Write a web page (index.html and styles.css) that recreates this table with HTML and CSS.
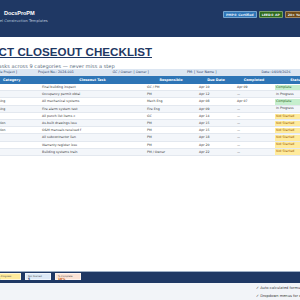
FILE: index.html
```html
<!DOCTYPE html>
<html lang="en">
<head>
<meta charset="utf-8">
<title>Project Closeout Checklist</title>
<link rel="stylesheet" href="styles.css">
</head>
<body>
<div class="page">
  <header class="top">
    <div class="brand">
      <div class="brand-name">DocsProPM</div>
      <div class="brand-sub">Professional Excel Construction Templates</div>
    </div>
    <div class="badges">
      <span class="badge b-blue">PMP® Certified</span>
      <span class="badge b-green">LEED® AP</span>
      <span class="badge b-brown">20+ Years Experience</span>
    </div>
  </header>

  <section class="intro">
    <h1 class="title">PROJECT CLOSEOUT CHECKLIST</h1>
    <p class="lead">Track 45 tasks across 9 categories — never miss a step</p>
  </section>

  <div class="info">
    <span>Project Name: [ Sample Project ]</span>
    <span>Project No.: 2024-001</span>
    <span>GC / Owner: [ Owner ]</span>
    <span>PM: [ Your Name ]</span>
    <span>Date: 04/09/2026</span>
  </div>

  <div class="table">
    <div class="row head">
      <div class="c-cat">Category</div>
      <div>Closeout Task</div>
      <div>Responsible</div>
      <div>Due Date</div>
      <div>Completed</div>
      <div>Status</div>
      <div>Notes</div>
    </div>
    <div class="row">
      <div class="c-cat">Permits</div><div>Final building inspect</div><div>GC / PM</div><div>Apr 10</div><div>Apr 09</div><div><span class="st st-done">Complete</span></div><div></div>
    </div>
    <div class="row">
      <div class="c-cat">Permits</div><div>Occupancy permit obtai</div><div>PM</div><div>Apr 12</div><div>—</div><div><span class="st">In Progress</span></div><div></div>
    </div>
    <div class="row">
      <div class="c-cat">Commissioning</div><div>All mechanical systems</div><div>Mech Eng</div><div>Apr 08</div><div>Apr 07</div><div><span class="st st-done">Complete</span></div><div></div>
    </div>
    <div class="row">
      <div class="c-cat">Commissioning</div><div>Fire alarm system test</div><div>Fire Eng</div><div>Apr 09</div><div>—</div><div><span class="st">In Progress</span></div><div></div>
    </div>
    <div class="row">
      <div class="c-cat">Punch</div><div>All punch list items c</div><div>GC</div><div>Apr 14</div><div>—</div><div><span class="st st-todo">Not Started</span></div><div></div>
    </div>
    <div class="row">
      <div class="c-cat">Documentation</div><div>As-built drawings issu</div><div>PM</div><div>Apr 15</div><div>—</div><div><span class="st st-todo">Not Started</span></div><div></div>
    </div>
    <div class="row">
      <div class="c-cat">Documentation</div><div>O&amp;M manuals received f</div><div>PM</div><div>Apr 15</div><div>—</div><div><span class="st st-todo">Not Started</span></div><div></div>
    </div>
    <div class="row">
      <div class="c-cat">Financial</div><div>All subcontractor lien</div><div>PM</div><div>Apr 18</div><div>—</div><div><span class="st st-todo">Not Started</span></div><div></div>
    </div>
    <div class="row">
      <div class="c-cat">Warranty</div><div>Warranty register issu</div><div>PM</div><div>Apr 20</div><div>—</div><div><span class="st st-todo">Not Started</span></div><div></div>
    </div>
    <div class="row">
      <div class="c-cat">Training</div><div>Building systems train</div><div>PM / Owner</div><div>Apr 22</div><div>—</div><div><span class="st st-todo">Not Started</span></div><div></div>
    </div>
  </div>

  <div class="summary">
    <div class="card k-green"><span class="k-label">Complete</span><span class="k-val">2</span></div>
    <div class="card k-yellow"><span class="k-label">In Progress</span><span class="k-val">2</span></div>
    <div class="card k-blue"><span class="k-label">Not Started</span><span class="k-val">5</span></div>
    <div class="card k-peach"><span class="k-label">% Complete</span><span class="k-val k-orange">18%</span></div>
  </div>

  <footer class="features">
    <div></div>
    <ul class="feat-list">
      <li>✓ Auto-calculated formulas</li>
      <li>✓ Dropdown menus for status</li>
    </ul>
  </footer>
</div>
</body>
</html>
```

FILE: styles.css
```css
html, body {
  margin: 0;
  padding: 0;
  background: #ffffff;
}
body {
  width: 300px;
  height: 300px;
  overflow: hidden;
  font-family: "DejaVu Sans", "Liberation Sans", sans-serif;
  color: #2b2b2b;
}
.page {
  width: 380px;
  height: 300px;
  margin-left: -40px;
  display: flex;
  flex-direction: column;
}

/* header */
.top {
  height: 37px;
  flex: 0 0 37px;
  background: #1f3864;
  display: flex;
  align-items: flex-start;
  box-sizing: border-box;
  padding-top: 10px;
}
.brand {
  width: 263px;
  box-sizing: border-box;
  padding-left: 10px;
}
.brand-name {
  padding-left: 34px;
  font-family: "Liberation Sans", sans-serif;
  font-weight: bold;
  font-size: 5.6px;
  line-height: 7px;
  letter-spacing: -0.1px;
  color: #ffffff;
}
.brand-sub {
  margin-top: 2px;
  font-size: 3.7px;
  line-height: 4px;
  color: #b7c6dc;
  white-space: nowrap;
}
.badges {
  display: flex;
  gap: 2px;
  padding-top: 1px;
}
.badge {
  display: inline-block;
  height: 7px;
  line-height: 6px;
  box-sizing: border-box;
  padding: 0 2px;
  font-size: 3.2px;
  font-weight: bold;
  color: #e8f0fb;
  border: 0.5px solid rgba(255,255,255,0.35);
  border-radius: 1px;
  white-space: nowrap;
}
.b-blue { background: #2e75b6; }
.b-green { background: #2f6b1c; }
.b-brown { background: #6e4a16; }

/* intro */
.intro {
  padding: 4px 0 0 0;
  height: 32px;
  flex: 0 0 32px;
  box-sizing: border-box;
  white-space: nowrap;
}
.title {
  display: inline-block;
  margin: 0 0 0 -1px;
  font-family: "Liberation Sans", sans-serif;
  font-weight: bold;
  font-size: 11.6px;
  line-height: 11px;
  color: #1f3864;
  border-bottom: 1px solid #1f3864;
  letter-spacing: 0.05px;
}
.lead {
  margin: 3px 0 0 13.5px;
  font-size: 5.1px;
  line-height: 6px;
  color: #5b6b7e;
}

/* info bar */
.info {
  flex: 0 0 7px;
  height: 7px;
  background: #dce6f2;
  display: grid;
  grid-template-columns: repeat(5, 74.5px);
  padding-left: 3.5px;
  align-items: center;
  font-size: 3.3px;
  line-height: 7px;
  color: #1f3864;
  white-space: nowrap;
}

/* table */
.table {
  flex: 1 1 auto;
}
.row {
  display: grid;
  grid-template-columns: 80px 105px 52px 38px 38px 47px 20px;
  height: 7.2px;
  align-items: center;
  font-size: 3.2px;
  line-height: 7.2px;
  color: #3a3a3a;
  border-bottom: 0.3px solid #e3e8ef;
  box-sizing: border-box;
  white-space: nowrap;
}
.row > div {
  padding-left: 2px;
  overflow: hidden;
  height: 100%;
}
.row:nth-child(odd) { background: #f3f6fa; }
.row .c-cat { padding-left: 21px; }
.row.head {
  height: 8px;
  line-height: 8px;
  background: #2e75b6;
  color: #ffffff;
  font-weight: bold;
  font-size: 3.4px;
  border-bottom: none;
}
.row.head > div {
  text-align: center;
  padding-left: 0;
}
.row.head .c-cat {
  text-align: left;
  padding-left: 43px;
}
.st {
  display: block;
  height: 5.6px;
  line-height: 5.6px;
  margin: 0.8px 0 0 -0.5px;
  padding-left: 1.5px;
}
.st-done { background: #c6efce; color: #276221; }
.st-todo { background: #ffeb9c; color: #9c5700; }

/* summary bar */
.summary {
  flex: 0 0 10px;
  height: 10px;
  background: #1f3864;
  border-top: 1.5px solid #9fb0c6;
  display: flex;
  gap: 4px;
  padding: 1px 0 0 5px;
  box-sizing: content-box;
}
.card {
  width: 26px;
  height: 7px;
  box-sizing: border-box;
  border: 0.5px solid rgba(255,255,255,0.6);
  padding: 0.5px 2px;
  display: flex;
  flex-direction: column;
  line-height: 3px;
}
.k-label { font-size: 2.4px; color: #4a4a4a; }
.k-val { font-size: 3px; font-weight: bold; color: #1f3864; }
.k-orange { color: #c55a11; }
.k-green { background: #c6efce; }
.k-yellow { background: #ffeb9c; }
.k-blue { background: #dde9f7; }
.k-peach { background: #fce4d6; }

/* features */
.features {
  flex: 0 0 14.5px;
  background: #f2f4f8;
  display: grid;
  grid-template-columns: 296px 84px;
}
.feat-list {
  list-style: none;
  margin: 0;
  padding: 2px 0 0 0;
  font-size: 3.6px;
  line-height: 7.5px;
  color: #3a3a3a;
  white-space: nowrap;
}
```
